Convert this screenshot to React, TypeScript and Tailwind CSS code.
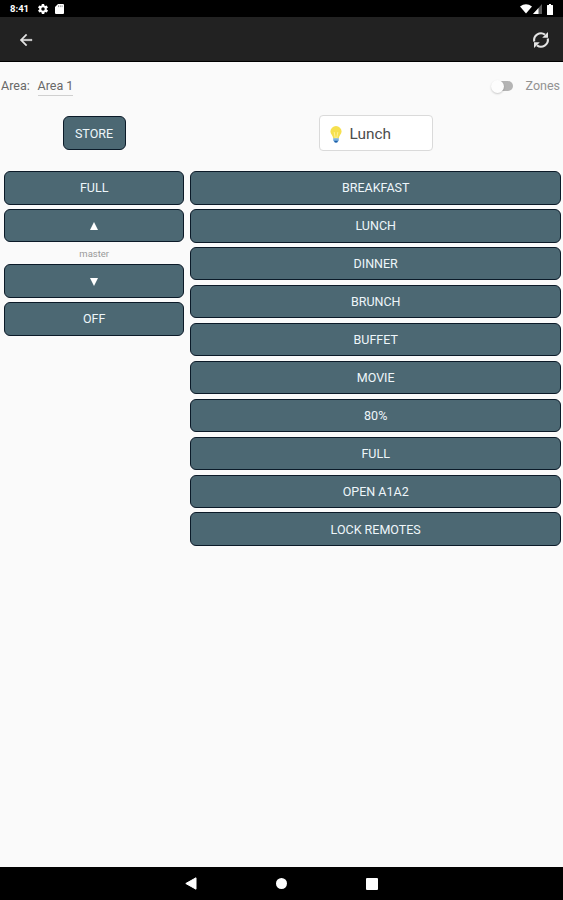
import { useState } from 'react'

const presets = [
  'BREAKFAST',
  'LUNCH',
  'DINNER',
  'BRUNCH',
  'BUFFET',
  'MOVIE',
  '80%',
  'FULL',
  'OPEN A1A2',
  'LOCK REMOTES',
]

interface PanelButtonProps {
  children: React.ReactNode
  onClick?: () => void
  className?: string
}

function PanelButton({ children, onClick, className = 'w-full h-[33.6px]' }: PanelButtonProps) {
  return (
    <button
      onClick={onClick}
      className={`${className} shrink-0 flex items-center justify-center rounded-[6px] border border-[#0b1a28] bg-[#4c6873] pt-[1.5px] text-[12.5px] leading-none text-[#eef6fa]`}
    >
      {children}
    </button>
  )
}

function StatusBar() {
  return (
    <div className="h-[17px] shrink-0 bg-black flex items-center justify-between pl-[10px] pr-[10px] pt-px text-white">
      <div className="flex items-center">
        <span className="w-[27px] text-[9.5px] font-bold leading-none">8:41</span>
        <svg className="w-[12px] h-[12px]" viewBox="0 0 24 24" fill="currentColor">
          <path d="M19.4 13c0-.3.1-.6.1-1s0-.7-.1-1l2.1-1.6c.2-.2.3-.4.1-.7l-2-3.4c-.1-.2-.4-.3-.6-.2l-2.5 1a7 7 0 0 0-1.7-1l-.4-2.6a.5.5 0 0 0-.5-.4h-4a.5.5 0 0 0-.5.4L9.1 5.1a7 7 0 0 0-1.7 1l-2.5-1c-.2-.1-.5 0-.6.2l-2 3.4c-.1.2-.1.5.1.7L4.6 11a8 8 0 0 0 0 2l-2.1 1.6c-.2.2-.3.4-.1.7l2 3.4c.1.2.4.3.6.2l2.5-1a7 7 0 0 0 1.7 1l.4 2.6c0 .2.2.4.5.4h4c.2 0 .5-.2.5-.4l.4-2.6a7 7 0 0 0 1.7-1l2.5 1c.2.1.5 0 .6-.2l2-3.4c.1-.2.1-.5-.1-.7L19.4 13zM12 15.5a3.5 3.5 0 1 1 0-7 3.5 3.5 0 0 1 0 7z" />
        </svg>
        <svg className="ml-[6px] w-[9px] h-[10px]" viewBox="0 0 9 10" fill="currentColor">
          <path d="M3 0h5q1 0 1 1v8q0 1-1 1H1Q0 10 0 9V3z" />
          <path d="M3.5 1.3v1.8M5.3 1.3v1.8M7.1 1.3v1.8" stroke="#555" strokeWidth=".6" />
        </svg>
      </div>
      <div className="flex items-center">
        <svg className="w-[12px] h-[10px]" viewBox="0 0 12 10" fill="currentColor">
          <path d="M6 9.5 0 2.4Q6-1.8 12 2.4z" />
        </svg>
        <svg className="ml-px w-[9px] h-[10px]" viewBox="0 0 9 10" fill="currentColor">
          <path d="M9 0v10H0z" opacity=".35" />
          <path d="M5.5 4v6H0z" />
        </svg>
        <svg className="ml-[5px] w-[6px] h-[11px]" viewBox="0 0 6 11" fill="currentColor">
          <path d="M2 0h2v1h1.5q.5 0 .5.5v9q0 .5-.5.5h-5Q0 11 0 10.5v-9Q0 1 .5 1H2z" />
        </svg>
      </div>
    </div>
  )
}

function AppBar() {
  return (
    <header className="h-[45px] shrink-0 bg-[#222222] border-b border-black flex items-center justify-between pt-[2px] pl-[17px] pr-[12px] text-[#e4e4e4]">
      <button aria-label="Back">
        <svg className="w-[18px] h-[18px]" viewBox="0 0 24 24" fill="currentColor" stroke="currentColor" strokeWidth=".5">
          <path d="M20 11H7.83l5.59-5.59L12 4l-8 8 8 8 1.41-1.41L7.83 13H20v-2z" />
        </svg>
      </button>
      <button aria-label="Refresh">
        <svg className="w-[20px] h-[20px]" viewBox="0 0 20 20" fill="none" stroke="currentColor" strokeWidth="2.1">
          <path d="M3.2 11.5A6.9 6.9 0 0 1 14 4.7M16.8 8.5A6.9 6.9 0 0 1 6 15.3" />
          <path d="M17 2V7.8H11.2zM3 18V12.2H8.8z" fill="currentColor" stroke="none" />
        </svg>
      </button>
    </header>
  )
}

function BulbIcon() {
  return (
    <svg className="w-[12px] h-[17px]" viewBox="0 0 12 17">
      <path d="M6 0a5.6 5.6 0 0 0-5.6 5.6C.4 8.3 3 9.5 3.2 12.5h5.6C9 9.5 11.6 8.3 11.6 5.6A5.6 5.6 0 0 0 6 0z" fill="#f6e04e" />
      <path d="M4.2 6 5.2 12h1.6l1-6" fill="none" stroke="#fff29a" strokeWidth=".9" />
      <path d="M3.2 12.2h5.6v2.3L7.3 16.5H4.7L3.2 14.5z" fill="#7fb3e0" />
      <path d="M4 14.7h4l-1 1.8H5z" fill="#1e5fa8" />
    </svg>
  )
}

function NavBar() {
  return (
    <nav className="h-[33px] shrink-0 bg-black flex items-center pl-[185px] text-white">
      <svg className="w-[12px] h-[13px]" viewBox="0 0 12 13" fill="currentColor">
        <path d="M11 .8v11.4L.8 6.5z" stroke="currentColor" strokeLinejoin="round" />
      </svg>
      <svg className="ml-[79px] w-[11px] h-[11px]" viewBox="0 0 11 11" fill="currentColor">
        <circle cx="5.5" cy="5.5" r="5.5" />
      </svg>
      <svg className="ml-[79px] w-[12px] h-[12px]" viewBox="0 0 12 12" fill="currentColor">
        <rect width="12" height="12" rx="1" />
      </svg>
    </nav>
  )
}

export default function App() {
  const [preset, setPreset] = useState('Lunch')
  const [zones, setZones] = useState(false)

  return (
    <div className="w-full h-[900px] flex flex-col bg-[#fafafa] font-[Roboto,sans-serif] overflow-hidden">
      <StatusBar />
      <AppBar />

      <main className="flex-1">
        <div className="h-[48px] flex items-center justify-between pl-px pr-[3px] text-[12.5px] leading-none">
          <div className="flex items-center text-[#686868]">
            <span className="w-[36.5px]">Area:</span>
            <span className="h-[20px] pt-[4px] border-b border-[#d0d0d0]">Area 1</span>
          </div>
          <button onClick={() => setZones(!zones)} className="flex items-center text-[#929292]">
            <span className="w-[24px] h-[13px] flex items-center">
              <span className="w-[13px] h-[13px] shrink-0 rounded-full bg-[#fdfdfd] shadow-[0_1px_2px_rgba(0,0,0,0.2)] z-10" />
              <span className="-ml-[4px] w-[13px] h-[10px] rounded-r-full bg-[#b4b4b4]" />
            </span>
            <span className="ml-[11px]">Zones</span>
          </button>
        </div>

        <div className="h-[61px] flex">
          <div className="w-[188px] pt-[6px] flex justify-center">
            <PanelButton className="w-[63px] h-[34px]">STORE</PanelButton>
          </div>
          <div className="flex-1 pt-[5px] flex justify-center">
            <div className="w-[114px] h-[36px] flex items-center rounded-[4px] border border-[#dadada] bg-white pl-[10px] pt-[2px] text-[15.4px] text-[#4c4c4c]">
              <BulbIcon />
              <span className="ml-[8px] pt-px">{preset}</span>
            </div>
          </div>
        </div>

        <div className="flex gap-[6px] pl-[4px] pr-[2px]">
          <div className="w-[180.4px] flex flex-col gap-[4.3px]">
            <PanelButton>FULL</PanelButton>
            <PanelButton>
              <svg className="w-[8px] h-[8px]" viewBox="0 0 8 8" fill="white"><path d="M4 0l4 8H0z" /></svg>
            </PanelButton>
            <div className="h-[13.2px] flex items-center justify-center text-[9.5px] leading-none text-[#999999]">master</div>
            <PanelButton>
              <svg className="w-[8px] h-[8px]" viewBox="0 0 8 8" fill="white"><path d="M4 8L0 0h8z" /></svg>
            </PanelButton>
            <PanelButton>OFF</PanelButton>
          </div>
          <div className="flex-1 flex flex-col gap-[4.35px]">
            {presets.map((name) => (
              <PanelButton
                key={name}
                onClick={() => setPreset(name.charAt(0) + name.slice(1).toLowerCase())}
              >
                {name}
              </PanelButton>
            ))}
          </div>
        </div>
      </main>

      <NavBar />
    </div>
  )
}
